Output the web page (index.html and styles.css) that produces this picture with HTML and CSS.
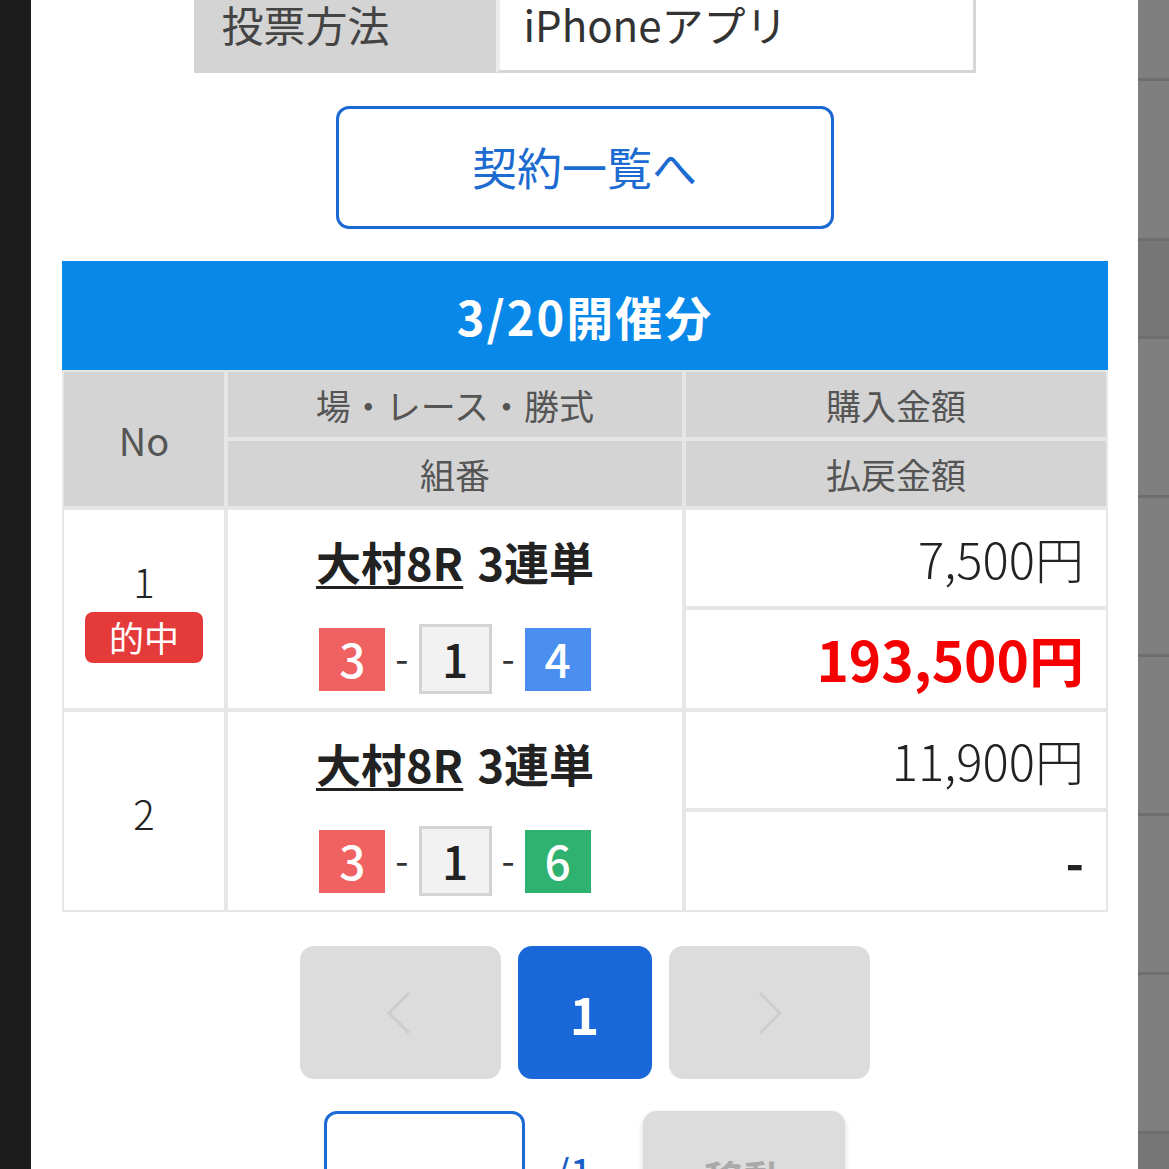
FILE: index.html
```html
<!DOCTYPE html>
<html lang="ja">
<head>
<meta charset="utf-8">
<title>投票結果</title>
<link rel="stylesheet" href="styles.css">
</head>
<body>
<div class="page">
  <div class="edge-left"></div>
  <main class="panel">
    <div class="info">
      <div class="info-label">投票方法</div>
      <div class="info-value">iPhoneアプリ</div>
    </div>
    <a class="btn-outline" href="#">契約一覧へ</a>
    <section class="results">
      <h2 class="results-title">3/20開催分</h2>
      <div class="grid">
        <div class="th th-no">No</div>
        <div class="th">場・レース・勝式</div>
        <div class="th">購入金額</div>
        <div class="th">組番</div>
        <div class="th">払戻金額</div>

        <div class="td td-no">
          <span class="no-num">1</span>
          <span class="badge">的中</span>
        </div>
        <div class="td td-race">
          <div class="race-title"><span class="race-link">大村8R</span> 3連単</div>
          <div class="combo">
            <span class="num n3">3</span><span class="dash">-</span><span class="num n1">1</span><span class="dash">-</span><span class="num n4">4</span>
          </div>
        </div>
        <div class="td td-amt">7,500円</div>
        <div class="td td-amt td-pay hit">193,500円</div>

        <div class="td td-no">
          <span class="no-num">2</span>
        </div>
        <div class="td td-race">
          <div class="race-title"><span class="race-link">大村8R</span> 3連単</div>
          <div class="combo">
            <span class="num n3">3</span><span class="dash">-</span><span class="num n1">1</span><span class="dash">-</span><span class="num n6">6</span>
          </div>
        </div>
        <div class="td td-amt">11,900円</div>
        <div class="td td-amt td-pay none">-</div>
      </div>
    </section>
    <nav class="pager">
      <span class="page-btn disabled">
        <svg width="30" height="46" viewBox="0 0 30 46"><path d="M24 3 L4 23 L24 43" fill="none" stroke="#cdcdcd" stroke-width="3"/></svg>
      </span>
      <span class="page-btn current">1</span>
      <span class="page-btn disabled">
        <svg width="30" height="46" viewBox="0 0 30 46"><path d="M6 3 L26 23 L6 43" fill="none" stroke="#cdcdcd" stroke-width="3"/></svg>
      </span>
    </nav>
    <div class="jump">
      <span class="jump-input"></span>
      <span class="jump-total">/1</span>
      <span class="jump-btn">移動</span>
    </div>
  </main>
  <div class="edge-right">
    <div class="seg s1"></div>
    <div class="seg s2"></div>
    <div class="seg s3 dark"></div>
    <div class="seg s4"></div>
    <div class="seg s4"></div>
    <div class="seg s4"></div>
    <div class="seg s4"></div>
    <div class="seg s4"></div>
    <div class="seg last dark"></div>
  </div>
</div>
</body>
</html>
```

FILE: styles.css
```css
* { box-sizing: border-box; }
html, body {
  margin: 0;
  padding: 0;
  height: 1169px;
  overflow: hidden;
  background: #ffffff;
  font-family: "Noto Sans CJK JP", "Noto Sans", sans-serif;
  color: #222;
}
.page {
  display: flex;
  height: 1169px;
}
.edge-left {
  width: 31px;
  flex: 0 0 31px;
  background: #1c1c1c;
}
.panel {
  flex: 0 0 1107px;
  width: 1107px;
  background: #fff;
  display: flex;
  flex-direction: column;
  align-items: center;
  overflow: hidden;
}
.panel > * { flex-shrink: 0; }
.edge-right {
  flex: 1 1 auto;
  background: #7f7f7f;
  display: flex;
  flex-direction: column;
}
.seg { border-bottom: 3px solid #6e6e6e; flex: 0 0 auto; }
.s1 { height: 81px; }
.s2 { height: 160px; }
.s3 { height: 98px; }
.s4 { height: 159px; }
.seg.last { flex: 1 1 auto; border-bottom: 0; }
.dark { background: #767676; }

/* info table */
.info {
  display: flex;
  width: 782px;
  height: 100px;
  margin-top: -27px;
  margin-left: 0;
}
.info-label {
  width: 302px;
  flex: 0 0 302px;
  background: #d4d4d4;
  color: #444;
  font-size: 42px;
  display: flex;
  align-items: center;
  padding-left: 28px;
}
.info-value {
  flex: 1;
  border-left: 4px solid #ebebeb;
  border-right: 3px solid #d6d6d6;
  border-bottom: 3px solid #d6d6d6;
  color: #333;
  font-size: 42px;
  display: flex;
  align-items: center;
  padding-left: 24px;
  padding-top: 3px;
}

/* outline button */
.btn-outline {
  margin-top: 33px;
  width: 498px;
  height: 123px;
  border: 3px solid #1c68d2;
  border-radius: 13px;
  color: #1b6bd1;
  font-size: 45px;
  text-decoration: none;
  display: flex;
  align-items: center;
  justify-content: center;
  padding-bottom: 2px;
}

/* results */
.results {
  margin-top: 32px;
  width: 1046px;
  margin-left: 1px;
}
.results-title {
  margin: 0;
  height: 109px;
  background: #0888e8;
  color: #fff;
  font-size: 47px;
  font-weight: 700;
  display: flex;
  align-items: center;
  justify-content: center;
  letter-spacing: 2px;
}
.grid {
  display: grid;
  grid-template-columns: 160px 454px 420px;
  grid-template-rows: 65px 65px 96px 98px 96px 98px;
  gap: 4px;
  padding: 2px;
  background: #e6e6e6;
}
.th {
  background: #d4d4d4;
  color: #555;
  font-size: 35px;
  display: flex;
  align-items: center;
  justify-content: center;
}
.th-no {
  grid-row: span 2;
  font-size: 38px;
}
.td {
  background: #fff;
}
.td-no {
  grid-row: span 2;
  display: flex;
  flex-direction: column;
  align-items: center;
  justify-content: center;
  gap: 9px;
  padding-top: 4px;
}
.no-num {
  font-size: 40px;
  line-height: 44px;
  color: #222;
  font-weight: 300;
}
.badge {
  width: 118px;
  height: 51px;
  border-radius: 8px;
  background: #e53a3a;
  color: #fff;
  font-size: 35px;
  display: flex;
  align-items: center;
  justify-content: center;
  padding-bottom: 2px;
}
.td-race {
  grid-row: span 2;
  display: flex;
  flex-direction: column;
  align-items: center;
  padding-top: 24px;
}
.race-title {
  font-size: 45px;
  line-height: 56px;
  font-weight: 700;
  color: #222;
  word-spacing: 4px;
}
.race-link {
  text-decoration: underline;
  text-decoration-thickness: 3px;
  text-underline-offset: 5px;
}
.combo {
  margin-top: 34px;
  display: flex;
  align-items: center;
}
.num {
  width: 66px;
  height: 63px;
  display: flex;
  align-items: center;
  justify-content: center;
  font-size: 46px;
  font-weight: 500;
  color: #fff;
  padding-bottom: 3px;
}
.n3 { background: #f06262; }
.n4 { background: #4a8ef0; }
.n6 { background: #2fb170; }
.n1 {
  width: 73px;
  height: 70px;
  background: #f2f2f2;
  border: 3px solid #d3d3d3;
  color: #222;
}
.dash {
  font-size: 38px;
  margin: 0 10px;
  color: #333;
  padding-bottom: 6px;
}
.td-amt {
  display: flex;
  align-items: center;
  justify-content: flex-end;
  padding-right: 22px;
  font-size: 49px;
  color: #222;
  padding-bottom: 2px;
  font-weight: 300;
}
.td-pay.hit {
  color: #f50000;
  font-weight: 700;
  font-size: 55px;
}
.td-pay.none {
  font-weight: 700;
  font-size: 50px;
}

/* pager */
.pager {
  margin-top: 34px;
  display: flex;
  gap: 17px;
}
.page-btn {
  height: 133px;
  border-radius: 14px;
  display: flex;
  align-items: center;
  justify-content: center;
}
.page-btn.disabled {
  width: 201px;
  background: #dcdcdc;
}
.page-btn.current {
  width: 134px;
  background: #1967d8;
  color: #fff;
  font-size: 50px;
  font-weight: 700;
}

/* jump */
.jump {
  margin-top: 32px;
  display: flex;
  align-items: center;
  height: 120px;
}
.jump-input {
  width: 201px;
  height: 120px;
  border: 3px solid #1d6ad4;
  border-radius: 13px;
  background: #fff;
}
.jump-total {
  margin: 0 50px 0 28px;
  font-size: 42px;
  color: #1a5fc8;
}
.jump-btn {
  width: 202px;
  height: 120px;
  border-radius: 14px;
  background: #dcdcdc;
  box-shadow: 0 2px 5px rgba(0,0,0,0.18);
  color: #a9a9a9;
  font-size: 40px;
  font-weight: 700;
  display: flex;
  align-items: flex-start;
  justify-content: center;
  padding-top: 38px;
}
```
